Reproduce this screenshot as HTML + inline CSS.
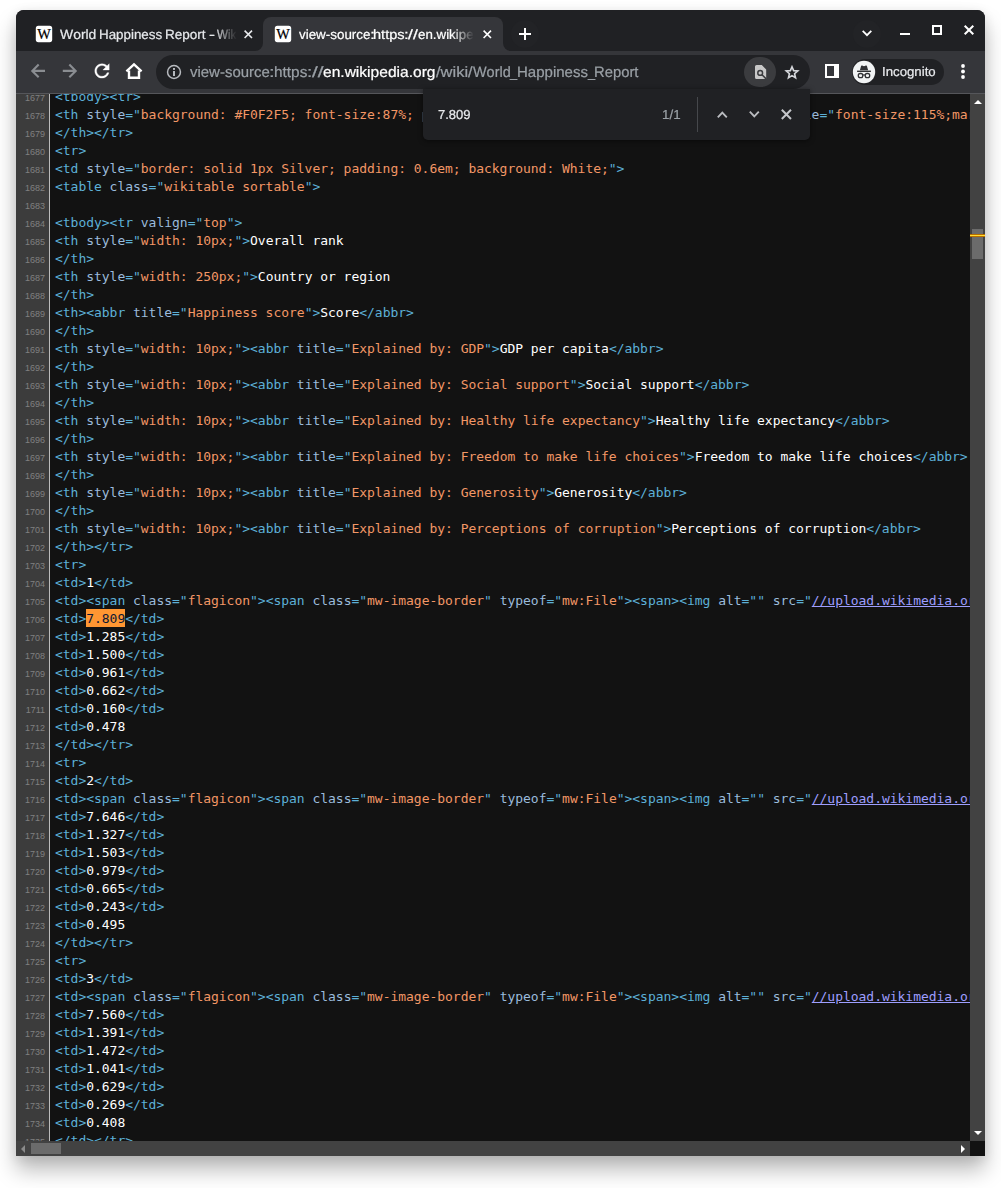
<!DOCTYPE html>
<html lang="en"><head><meta charset="utf-8"><title>view-source</title>
<style>
html,body{margin:0;padding:0;background:#fff;}
body{width:1001px;height:1188px;position:relative;overflow:hidden;font-family:"Liberation Sans","DejaVu Sans",sans-serif;}
.abs{position:absolute;}
#shadow{position:absolute;left:16px;top:10px;width:969px;height:1146px;border-radius:8px 8px 0 0;box-shadow:0 14px 21px rgba(0,0,0,.27),0 2px 12px rgba(0,0,0,.09);}
#win{position:absolute;left:16px;top:10px;width:969px;height:1146px;border-radius:8px 8px 0 0;overflow:hidden;background:#202124;}
/* tab strip */
#tabstrip{position:absolute;left:0;top:0;width:969px;height:41px;background:#202124;}
.tabtitle{position:absolute;top:15.5px;height:18px;line-height:18px;font-size:13.3px;color:#e8eaed;white-space:nowrap;overflow:hidden;}
.sg{position:absolute;top:0;white-space:pre;text-rendering:geometricPrecision;transform-origin:0 50%;font-kerning:none;-webkit-text-stroke:0.22px currentColor;}
.fade{-webkit-mask-image:linear-gradient(90deg,#000 0,#000 calc(100% - 22px),transparent 100%);mask-image:linear-gradient(90deg,#000 0,#000 calc(100% - 22px),transparent 100%);}
#tab2{position:absolute;left:247px;top:7px;width:240px;height:34px;background:#35363a;border-radius:8px 8px 0 0;}
.foot{position:absolute;bottom:0;width:8px;height:8px;background:#35363a;}
.foot i{position:absolute;left:0;top:0;width:8px;height:8px;background:#202124;}
/* toolbar */
#toolbar{position:absolute;left:0;top:41px;width:969px;height:42px;background:#35363a;}
#tbline{position:absolute;left:0;top:83px;width:969px;height:1px;background:#55565a;}
#omni{position:absolute;left:140px;top:45px;width:654px;height:33.5px;border-radius:17px;background:#202124;}
#url{position:absolute;left:174px;top:52px;width:470px;height:22px;line-height:22px;font-size:15px;color:#9aa0a6;white-space:nowrap;}
#pill{position:absolute;left:836px;top:49px;width:92px;height:26px;border-radius:13px;background:#202124;}
#incog{position:absolute;left:867px;top:53px;width:60px;height:18px;line-height:18px;font-size:13px;color:#e8eaed;}
/* content */
#view{position:absolute;left:0;top:84px;width:954px;height:1047px;background:#121212;overflow:hidden;}
#code{position:absolute;left:0;top:-6px;width:2000px;letter-spacing:-0.027px;font-family:"DejaVu Sans Mono","Liberation Mono",monospace;font-size:13px;color:#fff;}
.r{height:18px;line-height:18px;white-space:pre;display:flex;}
.g{box-sizing:border-box;width:34px;padding:0 4px;background:#3c3c3c;border-right:1px solid #bbb;color:#808080;font:9px/18px "Liberation Sans",sans-serif;text-align:right;flex:none;padding-top:1px;height:18px;}
.c{padding:0 5px 0 5px;}
.t{color:#5db0d7}.n{color:#9bbbdc}.v{color:#f29766}.l{color:#9e9eff;text-decoration:underline}
.h{background:#ff9632;color:#0c1836;padding:2px 0 1px;}
/* scrollbars */
#vs{position:absolute;left:954px;top:84px;width:15px;height:1047px;background:#424242;}
#hs{position:absolute;left:0;top:1131px;width:954px;height:15px;background:#424242;}
#corner{position:absolute;left:954px;top:1131px;width:15px;height:15px;background:#121212;}
.thumb{position:absolute;background:#6b6b6b;}
/* find bar */
#find{position:absolute;left:407px;top:79px;width:387px;height:51px;background:#202124;border-radius:0 0 5px 5px;box-shadow:0 1px 5px rgba(0,0,0,.5);}
#find .q{position:absolute;left:16px;top:17px;width:60px;height:18px;line-height:18px;font-size:13px;color:#e8eaed;}
#find .cnt{position:absolute;left:239.9px;top:17px;width:40px;height:18px;line-height:18px;font-size:13px;color:#9aa0a6;}
#find .sep{position:absolute;left:274px;top:8px;width:1px;height:35px;background:#46484c;}
svg{position:absolute;overflow:visible;}
</style></head><body>
<div id="shadow"></div>
<div id="win">
 <div id="tabstrip">
  <!-- tab 1 (inactive) -->
  <svg style="left:20px;top:16px" width="16" height="16" viewBox="0 0 16 16"><rect x="-0.2" y="-0.2" width="16.4" height="16.4" rx="2.6" fill="#fff"/><text x="8" y="13.2" transform="translate(0,13.2) scale(1,.97) translate(0,-13.2)" font-family="Liberation Serif,serif" font-size="14.4" text-anchor="middle" fill="#000" stroke="#000" stroke-width="0.25">W</text></svg>
  <div class="tabtitle fade" style="left:42px;width:179px;color:#e6e8eb"><span class="sg" style="left:2.14px;transform:scaleX(1.0469);">World</span><span class="sg" style="left:40.60px;transform:scaleX(1.0053);">Happiness</span><span class="sg" style="left:106.89px;transform:scaleX(1.0173);">Report</span><span class="sg" style="left:150.80px;transform:scaleX(1.3500);">-</span><span class="sg" style="left:158.55px;transform:scaleX(0.8771);">Wikipedia</span></div>
  <svg style="left:227.7px;top:19.7px" width="8.6" height="8.6" viewBox="0 0 8.6 8.6"><path d="M0.6 0.6L8 8M8 0.6L0.6 8" stroke="#e8eaed" stroke-width="1.6" fill="none"/></svg>
  <!-- tab 2 (active) -->
  <div id="tab2">
   <div class="foot" style="left:-8px"><i style="border-radius:0 0 8px 0"></i></div>
   <div class="foot" style="right:-8px"><i style="border-radius:0 0 0 8px"></i></div>
  </div>
  <svg style="left:259px;top:16px" width="16" height="16" viewBox="0 0 16 16"><rect x="-0.2" y="-0.2" width="16.4" height="16.4" rx="2.6" fill="#fff"/><text x="8" y="13.2" transform="translate(0,13.2) scale(1,.97) translate(0,-13.2)" font-family="Liberation Serif,serif" font-size="14.4" text-anchor="middle" fill="#000" stroke="#000" stroke-width="0.25">W</text></svg>
  <div class="tabtitle fade" style="left:281px;width:177px;color:#fff"><span class="sg" style="left:2.15px;transform:scaleX(1.0068);">view-source</span><span class="sg" style="left:73.36px;transform:scaleX(1.3500);">:</span><span class="sg" style="left:76.39px;transform:scaleX(1.0936);">https</span><span class="sg" style="left:107.17px;transform:scaleX(1.2635);">:</span><span class="sg" style="left:110.70px;transform:scaleX(1.3261);">//</span><span class="sg" style="left:121.33px;transform:scaleX(1.0020);">en.wikipedia.org/wiki/</span></div>
  <svg style="left:466.9px;top:19.7px" width="8.6" height="8.6" viewBox="0 0 8.6 8.6"><path d="M0.6 0.6L8 8M8 0.6L0.6 8" stroke="#fff" stroke-width="1.6" fill="none"/></svg>
  <div class="abs" style="left:495px;top:10px;width:28px;height:28px;border-radius:50%;background:#222326"></div>
  <div class="abs" style="left:837px;top:10px;width:28px;height:28px;border-radius:50%;background:#222326"></div>
  <!-- new tab -->
  <svg style="left:503px;top:18px" width="12" height="12" viewBox="0 0 12 12"><path d="M6 0V12M0 6H12" stroke="#fff" stroke-width="2" fill="none"/></svg>
  <!-- tab search chevron -->
  <svg style="left:846px;top:20px" width="10" height="7" viewBox="0 0 10 7"><path d="M0.7 0.8L5 5.2L9.3 0.8" stroke="#fff" stroke-width="1.8" fill="none"/></svg>
  <!-- window controls -->
  <div class="abs" style="left:884px;top:23px;width:10px;height:2px;background:#fff"></div>
  <div class="abs" style="left:916px;top:15px;width:6px;height:6px;border:2px solid #fff"></div>
  <svg style="left:948px;top:15px" width="10" height="10" viewBox="0 0 10 10"><path d="M0.7 0.7L9.3 9.3M9.3 0.7L0.7 9.3" stroke="#fff" stroke-width="2" fill="none"/></svg>
 </div>
 <div id="toolbar"></div>
 <div id="tbline"></div>
 <!-- nav icons -->
 <svg style="left:0;top:0" width="969" height="93" viewBox="0 0 969 93">
  <path d="M29 60.9H16.8M22.66 54.54L16.3 60.9L22.66 67.26" stroke="#8a8d91" stroke-width="2.1" fill="none"/>
  <path d="M46.8 60.9H59.2M53.34 54.54L59.7 60.9L53.34 67.26" stroke="#8a8d91" stroke-width="2.1" fill="none"/>
  <g transform="translate(86 60.9) scale(0.9) translate(-12 -12)"><path d="M17.65 6.35C16.2 4.9 14.21 4 12 4c-4.42 0-7.99 3.58-7.99 8s3.57 8 7.99 8c3.73 0 6.84-2.55 7.73-6h-2.08c-.82 2.33-3.04 4-5.65 4-3.31 0-6-2.69-6-6s2.69-6 6-6c1.66 0 3.14.69 4.22 1.78L13 11h7V4l-2.35 2.35z" fill="#fff" stroke="#fff" stroke-width="0.35"/></g>
  <path d="M110.4 61.4L118 54.3L125.6 61.4" stroke="#fff" stroke-width="2.3" fill="none" stroke-linejoin="miter"/>
  <path d="M113 60.6V67.8H123V60.6" stroke="#fff" stroke-width="2.4" fill="none" stroke-linejoin="miter"/>
 </svg>
 <div id="omni"></div>
 <svg style="left:151px;top:55px" width="14" height="14" viewBox="0 0 14 14"><circle cx="7" cy="7" r="6.45" stroke="#b6b9be" stroke-width="1.5" fill="none"/><path d="M7 6V10.9" stroke="#b6b9be" stroke-width="2"/><rect x="6" y="3" width="2" height="1.9" fill="#b6b9be"/></svg>
 <div id="url"><span class="sg" style="left:0.15px;transform:scaleX(0.9974);">view-source</span><span class="sg" style="left:79.15px;transform:scaleX(1.3500);">:</span><span class="sg" style="left:83.63px;transform:scaleX(1.0246);">https</span><span class="sg" style="left:117.07px;transform:scaleX(1.2603);">:</span><span class="sg" style="left:121.80px;transform:scaleX(1.3797);">//</span><span class="sg" style="left:133.34px;transform:scaleX(1.0375);color:#fff;">en.wikipedia.org</span><span class="sg" style="left:245.80px;transform:scaleX(1.1010);">/wiki/</span><span class="sg" style="left:282.84px;transform:scaleX(0.9623);">World</span><span class="sg" style="left:320.39px;transform:scaleX(0.8500);">_</span><span class="sg" style="left:326.77px;transform:scaleX(1.0014);">Happiness</span><span class="sg" style="left:397.99px;transform:scaleX(0.8500);">_</span><span class="sg" style="left:404.39px;transform:scaleX(0.9867);">Report</span></div>
 <!-- find icon -->
 <div class="abs" style="left:728px;top:47px;width:32px;height:30px;border-radius:15px;background:#3b3c3f"></div>
 <svg style="left:738.6px;top:55px" width="11.2" height="14" viewBox="0 0 11.2 14"><path d="M1.6 0H6.8L11.2 4.4V14H1.6A1.6 1.6 0 0 1 0 12.4V1.6A1.6 1.6 0 0 1 1.6 0Z" fill="#c8c8c8"/><circle cx="5.2" cy="7.9" r="2.4" stroke="#3b3c3f" stroke-width="1.5" fill="none"/><path d="M7 9.7L11.4 14.1" stroke="#3b3c3f" stroke-width="1.6"/></svg>
 <!-- star -->
 <svg style="left:768px;top:54px" width="16" height="16" viewBox="0 0 16 16"><g transform="translate(8 8.5) scale(0.86) translate(-8 -8.3)"><path d="M8 1.6L9.9 6.1L14.7 6.5L11 9.7L12.1 14.4L8 11.9L3.9 14.4L5 9.7L1.3 6.5L6.1 6.1Z" stroke="#d4d6da" stroke-width="1.9" fill="none" stroke-linejoin="miter"/></g></svg>
 <!-- side panel -->
 <svg style="left:809px;top:54px" width="14" height="14" viewBox="0 0 14 14"><rect x="1" y="1" width="12" height="12" stroke="#fff" stroke-width="2" fill="none"/><rect x="9" y="1" width="4" height="12" fill="#fff"/></svg>
 <!-- incognito -->
 <div id="pill"></div>
 <svg style="left:837px;top:51px" width="22" height="22" viewBox="0 0 22 22"><circle cx="11" cy="11" r="11.2" fill="#f1f3f4"/><path d="M6.9 9.3L8 5.2Q8.25 4.3 9.1 4.6L11 5.3L12.9 4.6Q13.75 4.3 14 5.2L15.1 9.3Z" fill="#303134"/><rect x="4.1" y="9.6" width="13.8" height="1.4" fill="#303134"/><rect x="5.3" y="12.5" width="4.5" height="4.2" rx="1.9" stroke="#303134" stroke-width="1.3" fill="none"/><rect x="12.2" y="12.5" width="4.5" height="4.2" rx="1.9" stroke="#303134" stroke-width="1.3" fill="none"/><path d="M9.8 14.2Q11 13.4 12.2 14.2" stroke="#303134" stroke-width="1.1" fill="none"/></svg>
 <div id="incog"><span class="sg" style="left:-1.22px;transform:scaleX(1.0173);">Incognito</span></div>
 <!-- menu -->
 <svg style="left:945px;top:54px" width="4" height="15" viewBox="0 0 4 15"><circle cx="2" cy="2" r="1.9" fill="#fff"/><circle cx="2" cy="7.5" r="1.9" fill="#fff"/><circle cx="2" cy="13" r="1.9" fill="#fff"/></svg>

 <!-- page content -->
 <div id="view"><div id="code">
<div class="r"><span class="g">1677</span><span class="c"><span class="t">&lt;tbody&gt;</span><span class="t">&lt;tr&gt;</span></span></div>
<div class="r"><span class="g">1678</span><span class="c"><span class="t">&lt;th </span><span class="n">style</span><span class="t">="</span><span class="v">background: #F0F2F5; font-size:87%; padding:0.2em 0.3em; text-align:center</span><span class="t">"&gt;</span><span class="t">&lt;span </span><span class="n">style</span><span class="t">="</span><span class="v">font-size:115%;margin:0 4em</span><span class="t">"&gt;</span></span></div>
<div class="r"><span class="g">1679</span><span class="c"><span class="t">&lt;/th&gt;</span><span class="t">&lt;/tr&gt;</span></span></div>
<div class="r"><span class="g">1680</span><span class="c"><span class="t">&lt;tr&gt;</span></span></div>
<div class="r"><span class="g">1681</span><span class="c"><span class="t">&lt;td </span><span class="n">style</span><span class="t">="</span><span class="v">border: solid 1px Silver; padding: 0.6em; background: White;</span><span class="t">"&gt;</span></span></div>
<div class="r"><span class="g">1682</span><span class="c"><span class="t">&lt;table </span><span class="n">class</span><span class="t">="</span><span class="v">wikitable sortable</span><span class="t">"&gt;</span></span></div>
<div class="r"><span class="g">1683</span><span class="c"></span></div>
<div class="r"><span class="g">1684</span><span class="c"><span class="t">&lt;tbody&gt;</span><span class="t">&lt;tr </span><span class="n">valign</span><span class="t">="</span><span class="v">top</span><span class="t">"&gt;</span></span></div>
<div class="r"><span class="g">1685</span><span class="c"><span class="t">&lt;th </span><span class="n">style</span><span class="t">="</span><span class="v">width: 10px;</span><span class="t">"&gt;</span>Overall rank</span></div>
<div class="r"><span class="g">1686</span><span class="c"><span class="t">&lt;/th&gt;</span></span></div>
<div class="r"><span class="g">1687</span><span class="c"><span class="t">&lt;th </span><span class="n">style</span><span class="t">="</span><span class="v">width: 250px;</span><span class="t">"&gt;</span>Country or region</span></div>
<div class="r"><span class="g">1688</span><span class="c"><span class="t">&lt;/th&gt;</span></span></div>
<div class="r"><span class="g">1689</span><span class="c"><span class="t">&lt;th&gt;</span><span class="t">&lt;abbr </span><span class="n">title</span><span class="t">="</span><span class="v">Happiness score</span><span class="t">"&gt;</span>Score<span class="t">&lt;/abbr&gt;</span></span></div>
<div class="r"><span class="g">1690</span><span class="c"><span class="t">&lt;/th&gt;</span></span></div>
<div class="r"><span class="g">1691</span><span class="c"><span class="t">&lt;th </span><span class="n">style</span><span class="t">="</span><span class="v">width: 10px;</span><span class="t">"&gt;</span><span class="t">&lt;abbr </span><span class="n">title</span><span class="t">="</span><span class="v">Explained by: GDP</span><span class="t">"&gt;</span>GDP per capita<span class="t">&lt;/abbr&gt;</span></span></div>
<div class="r"><span class="g">1692</span><span class="c"><span class="t">&lt;/th&gt;</span></span></div>
<div class="r"><span class="g">1693</span><span class="c"><span class="t">&lt;th </span><span class="n">style</span><span class="t">="</span><span class="v">width: 10px;</span><span class="t">"&gt;</span><span class="t">&lt;abbr </span><span class="n">title</span><span class="t">="</span><span class="v">Explained by: Social support</span><span class="t">"&gt;</span>Social support<span class="t">&lt;/abbr&gt;</span></span></div>
<div class="r"><span class="g">1694</span><span class="c"><span class="t">&lt;/th&gt;</span></span></div>
<div class="r"><span class="g">1695</span><span class="c"><span class="t">&lt;th </span><span class="n">style</span><span class="t">="</span><span class="v">width: 10px;</span><span class="t">"&gt;</span><span class="t">&lt;abbr </span><span class="n">title</span><span class="t">="</span><span class="v">Explained by: Healthy life expectancy</span><span class="t">"&gt;</span>Healthy life expectancy<span class="t">&lt;/abbr&gt;</span></span></div>
<div class="r"><span class="g">1696</span><span class="c"><span class="t">&lt;/th&gt;</span></span></div>
<div class="r"><span class="g">1697</span><span class="c"><span class="t">&lt;th </span><span class="n">style</span><span class="t">="</span><span class="v">width: 10px;</span><span class="t">"&gt;</span><span class="t">&lt;abbr </span><span class="n">title</span><span class="t">="</span><span class="v">Explained by: Freedom to make life choices</span><span class="t">"&gt;</span>Freedom to make life choices<span class="t">&lt;/abbr&gt;</span></span></div>
<div class="r"><span class="g">1698</span><span class="c"><span class="t">&lt;/th&gt;</span></span></div>
<div class="r"><span class="g">1699</span><span class="c"><span class="t">&lt;th </span><span class="n">style</span><span class="t">="</span><span class="v">width: 10px;</span><span class="t">"&gt;</span><span class="t">&lt;abbr </span><span class="n">title</span><span class="t">="</span><span class="v">Explained by: Generosity</span><span class="t">"&gt;</span>Generosity<span class="t">&lt;/abbr&gt;</span></span></div>
<div class="r"><span class="g">1700</span><span class="c"><span class="t">&lt;/th&gt;</span></span></div>
<div class="r"><span class="g">1701</span><span class="c"><span class="t">&lt;th </span><span class="n">style</span><span class="t">="</span><span class="v">width: 10px;</span><span class="t">"&gt;</span><span class="t">&lt;abbr </span><span class="n">title</span><span class="t">="</span><span class="v">Explained by: Perceptions of corruption</span><span class="t">"&gt;</span>Perceptions of corruption<span class="t">&lt;/abbr&gt;</span></span></div>
<div class="r"><span class="g">1702</span><span class="c"><span class="t">&lt;/th&gt;</span><span class="t">&lt;/tr&gt;</span></span></div>
<div class="r"><span class="g">1703</span><span class="c"><span class="t">&lt;tr&gt;</span></span></div>
<div class="r"><span class="g">1704</span><span class="c"><span class="t">&lt;td&gt;</span>1<span class="t">&lt;/td&gt;</span></span></div>
<div class="r"><span class="g">1705</span><span class="c"><span class="t">&lt;td&gt;</span><span class="t">&lt;span </span><span class="n">class</span><span class="t">="</span><span class="v">flagicon</span><span class="t">"&gt;</span><span class="t">&lt;span </span><span class="n">class</span><span class="t">="</span><span class="v">mw-image-border</span><span class="t">" </span><span class="n">typeof</span><span class="t">="</span><span class="v">mw:File</span><span class="t">"&gt;</span><span class="t">&lt;span&gt;</span><span class="t">&lt;img </span><span class="n">alt</span><span class="t">="" </span><span class="n">src</span><span class="t">="</span><span class="l">//upload.wikimedia.org/wikipedia/commons/thumb/b/bc/Flag.svg/23px-Flag.svg.png</span><span class="t">"</span></span></div>
<div class="r"><span class="g">1706</span><span class="c"><span class="t">&lt;td&gt;</span><span class="h">7.809</span><span class="t">&lt;/td&gt;</span></span></div>
<div class="r"><span class="g">1707</span><span class="c"><span class="t">&lt;td&gt;</span>1.285<span class="t">&lt;/td&gt;</span></span></div>
<div class="r"><span class="g">1708</span><span class="c"><span class="t">&lt;td&gt;</span>1.500<span class="t">&lt;/td&gt;</span></span></div>
<div class="r"><span class="g">1709</span><span class="c"><span class="t">&lt;td&gt;</span>0.961<span class="t">&lt;/td&gt;</span></span></div>
<div class="r"><span class="g">1710</span><span class="c"><span class="t">&lt;td&gt;</span>0.662<span class="t">&lt;/td&gt;</span></span></div>
<div class="r"><span class="g">1711</span><span class="c"><span class="t">&lt;td&gt;</span>0.160<span class="t">&lt;/td&gt;</span></span></div>
<div class="r"><span class="g">1712</span><span class="c"><span class="t">&lt;td&gt;</span>0.478</span></div>
<div class="r"><span class="g">1713</span><span class="c"><span class="t">&lt;/td&gt;</span><span class="t">&lt;/tr&gt;</span></span></div>
<div class="r"><span class="g">1714</span><span class="c"><span class="t">&lt;tr&gt;</span></span></div>
<div class="r"><span class="g">1715</span><span class="c"><span class="t">&lt;td&gt;</span>2<span class="t">&lt;/td&gt;</span></span></div>
<div class="r"><span class="g">1716</span><span class="c"><span class="t">&lt;td&gt;</span><span class="t">&lt;span </span><span class="n">class</span><span class="t">="</span><span class="v">flagicon</span><span class="t">"&gt;</span><span class="t">&lt;span </span><span class="n">class</span><span class="t">="</span><span class="v">mw-image-border</span><span class="t">" </span><span class="n">typeof</span><span class="t">="</span><span class="v">mw:File</span><span class="t">"&gt;</span><span class="t">&lt;span&gt;</span><span class="t">&lt;img </span><span class="n">alt</span><span class="t">="" </span><span class="n">src</span><span class="t">="</span><span class="l">//upload.wikimedia.org/wikipedia/commons/thumb/b/bc/Flag.svg/23px-Flag.svg.png</span><span class="t">"</span></span></div>
<div class="r"><span class="g">1717</span><span class="c"><span class="t">&lt;td&gt;</span>7.646<span class="t">&lt;/td&gt;</span></span></div>
<div class="r"><span class="g">1718</span><span class="c"><span class="t">&lt;td&gt;</span>1.327<span class="t">&lt;/td&gt;</span></span></div>
<div class="r"><span class="g">1719</span><span class="c"><span class="t">&lt;td&gt;</span>1.503<span class="t">&lt;/td&gt;</span></span></div>
<div class="r"><span class="g">1720</span><span class="c"><span class="t">&lt;td&gt;</span>0.979<span class="t">&lt;/td&gt;</span></span></div>
<div class="r"><span class="g">1721</span><span class="c"><span class="t">&lt;td&gt;</span>0.665<span class="t">&lt;/td&gt;</span></span></div>
<div class="r"><span class="g">1722</span><span class="c"><span class="t">&lt;td&gt;</span>0.243<span class="t">&lt;/td&gt;</span></span></div>
<div class="r"><span class="g">1723</span><span class="c"><span class="t">&lt;td&gt;</span>0.495</span></div>
<div class="r"><span class="g">1724</span><span class="c"><span class="t">&lt;/td&gt;</span><span class="t">&lt;/tr&gt;</span></span></div>
<div class="r"><span class="g">1725</span><span class="c"><span class="t">&lt;tr&gt;</span></span></div>
<div class="r"><span class="g">1726</span><span class="c"><span class="t">&lt;td&gt;</span>3<span class="t">&lt;/td&gt;</span></span></div>
<div class="r"><span class="g">1727</span><span class="c"><span class="t">&lt;td&gt;</span><span class="t">&lt;span </span><span class="n">class</span><span class="t">="</span><span class="v">flagicon</span><span class="t">"&gt;</span><span class="t">&lt;span </span><span class="n">class</span><span class="t">="</span><span class="v">mw-image-border</span><span class="t">" </span><span class="n">typeof</span><span class="t">="</span><span class="v">mw:File</span><span class="t">"&gt;</span><span class="t">&lt;span&gt;</span><span class="t">&lt;img </span><span class="n">alt</span><span class="t">="" </span><span class="n">src</span><span class="t">="</span><span class="l">//upload.wikimedia.org/wikipedia/commons/thumb/b/bc/Flag.svg/23px-Flag.svg.png</span><span class="t">"</span></span></div>
<div class="r"><span class="g">1728</span><span class="c"><span class="t">&lt;td&gt;</span>7.560<span class="t">&lt;/td&gt;</span></span></div>
<div class="r"><span class="g">1729</span><span class="c"><span class="t">&lt;td&gt;</span>1.391<span class="t">&lt;/td&gt;</span></span></div>
<div class="r"><span class="g">1730</span><span class="c"><span class="t">&lt;td&gt;</span>1.472<span class="t">&lt;/td&gt;</span></span></div>
<div class="r"><span class="g">1731</span><span class="c"><span class="t">&lt;td&gt;</span>1.041<span class="t">&lt;/td&gt;</span></span></div>
<div class="r"><span class="g">1732</span><span class="c"><span class="t">&lt;td&gt;</span>0.629<span class="t">&lt;/td&gt;</span></span></div>
<div class="r"><span class="g">1733</span><span class="c"><span class="t">&lt;td&gt;</span>0.269<span class="t">&lt;/td&gt;</span></span></div>
<div class="r"><span class="g">1734</span><span class="c"><span class="t">&lt;td&gt;</span>0.408</span></div>
<div class="r"><span class="g">1735</span><span class="c"><span class="t">&lt;/td&gt;</span><span class="t">&lt;/tr&gt;</span></span></div>
 </div></div>
 <!-- scrollbars -->
 <div id="vs">
  <svg style="left:3.5px;top:6px" width="8" height="4" viewBox="0 0 8 4"><path d="M0 4L4 0L8 4Z" fill="#fff"/></svg>
  <div class="thumb" style="left:2px;top:135px;width:11px;height:30px"></div>
  <div class="abs" style="left:0;top:140px;width:15px;height:3px;background:#ffdd33;border-top:1px solid #b86e00;border-bottom:1px solid #b86e00;box-sizing:border-box"></div>
  <svg style="left:3.5px;top:1037px" width="8" height="4" viewBox="0 0 8 4"><path d="M0 0L4 4L8 0Z" fill="#fff"/></svg>
 </div>
 <div id="hs">
  <svg style="left:5px;top:3.5px" width="4" height="8" viewBox="0 0 4 8"><path d="M4 0L0 4L4 8Z" fill="#8a8a8a"/></svg>
  <div class="thumb" style="left:15px;top:2px;width:30px;height:11px"></div>
  <svg style="left:944.5px;top:3.5px" width="4" height="8" viewBox="0 0 4 8"><path d="M0 0L4 4L0 8Z" fill="#fff"/></svg>
 </div>
 <div id="corner"></div>
 <!-- find bar -->
 <div id="find">
  <div class="q"><span class="sg" style="left:-0.67px;transform:scaleX(1.0016);">7.809</span></div>
  <div class="cnt"><span class="sg" style="left:-1.02px;transform:scaleX(1.0276);">1/1</span></div>
  <div class="sep"></div>
  <svg style="left:293.6px;top:21.6px" width="10.6" height="7" viewBox="0 0 10.6 7"><path d="M0.8 6.3L5.3 1.6L9.8 6.3" stroke="#b9bbbf" stroke-width="1.9" fill="none"/></svg>
  <svg style="left:325.8px;top:21.8px" width="10.6" height="7" viewBox="0 0 10.6 7"><path d="M0.8 0.7L5.3 5.4L9.8 0.7" stroke="#b9bbbf" stroke-width="1.9" fill="none"/></svg>
  <svg style="left:357.5px;top:19.8px" width="10.8" height="10.8" viewBox="0 0 10.8 10.8"><path d="M0.8 0.8L10 10M10 0.8L0.8 10" stroke="#c4c6ca" stroke-width="2" fill="none"/></svg>
 </div>
</div>
</body></html>
